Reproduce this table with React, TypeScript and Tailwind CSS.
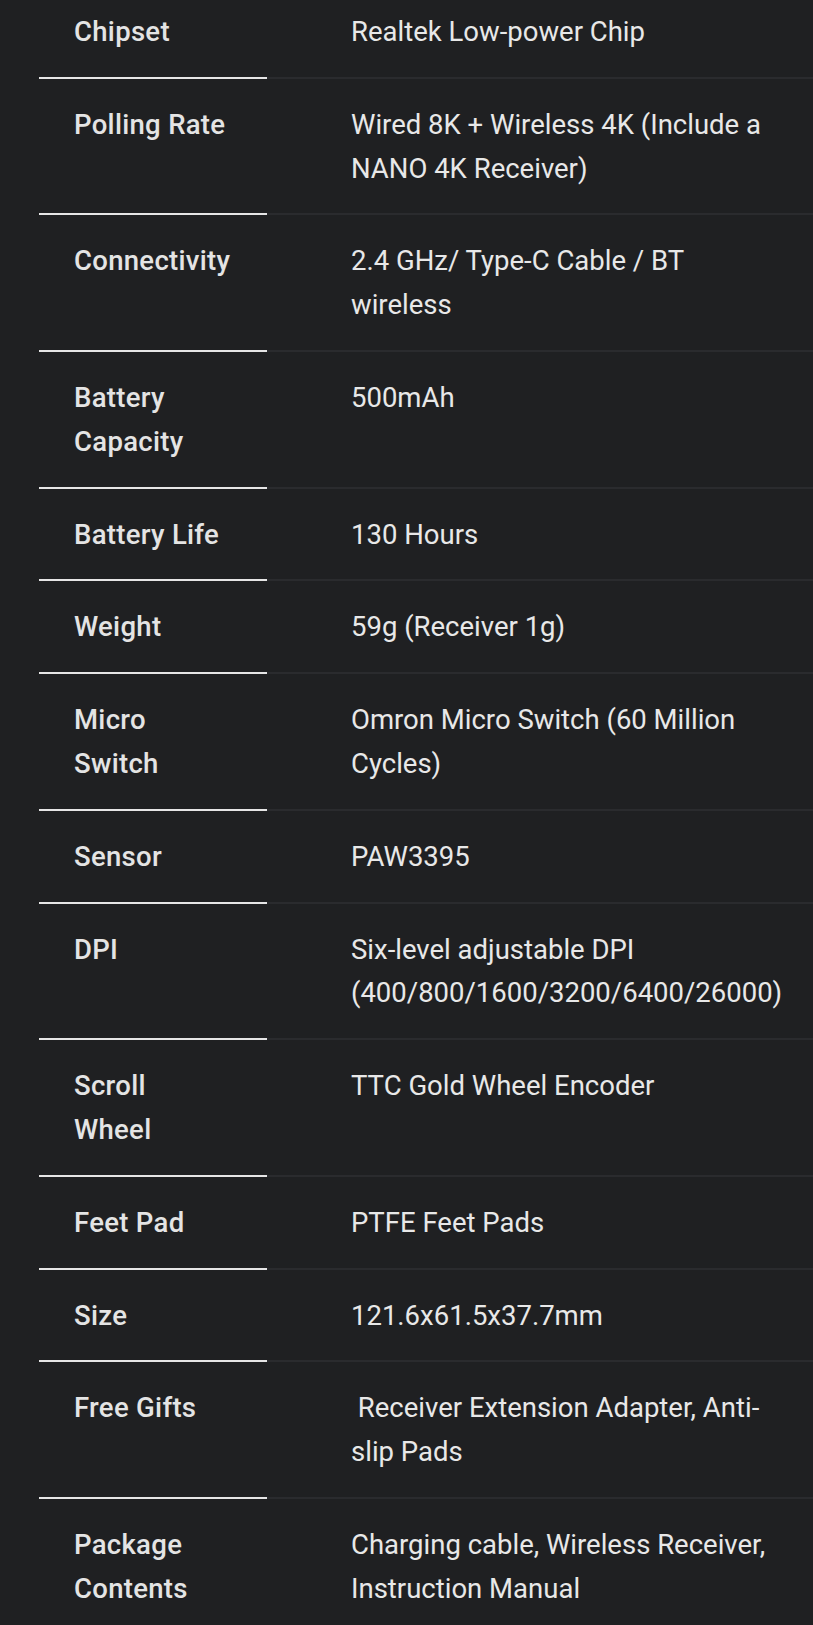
const specs: [string[], string[]][] = [
  [['Chipset'], ['Realtek Low-power Chip']],
  [['Polling Rate'], ['Wired 8K + Wireless 4K (Include a', 'NANO 4K Receiver)']],
  [['Connectivity'], ['2.4 GHz/ Type-C Cable / BT', 'wireless']],
  [['Battery', 'Capacity'], ['500mAh']],
  [['Battery Life'], ['130 Hours']],
  [['Weight'], ['59g (Receiver 1g)']],
  [['Micro', 'Switch'], ['Omron Micro Switch (60 Million', 'Cycles)']],
  [['Sensor'], ['PAW3395']],
  [['DPI'], ['Six-level adjustable DPI', '(400/800/1600/3200/6400/26000)']],
  [['Scroll', 'Wheel'], ['TTC Gold Wheel Encoder']],
  [['Feet Pad'], ['PTFE Feet Pads']],
  [['Size'], ['121.6x61.5x37.7mm']],
  [['Free Gifts'], ['\u00a0Receiver Extension Adapter, Anti-', 'slip Pads']],
  [['Package', 'Contents'], ['Charging cable, Wireless Receiver,', 'Instruction Manual']],
];

function Lines({ lines }: { lines: string[] }) {
  return (
    <>
      {lines.map((line, i) => (
        <span key={i} className="block whitespace-nowrap">
          {line}
        </span>
      ))}
    </>
  );
}

export default function App() {
  return (
    <div className="min-h-[1625px] w-[813px] overflow-hidden bg-[#1f2022] font-['Roboto',sans-serif] text-[27.5px] leading-[43.8px] text-[#e8e8e8]">
      <div className="-mt-[14px] pl-[39px]">
        {specs.map(([label, value]) => (
          <div key={label.join(' ')} className="flex">
            <div className="w-[228px] shrink-0 border-b-2 border-[#e6e6e6] pt-[24px] pb-[23px] pl-[35px] pr-[20px] font-medium tracking-[0.3px] text-[#e4e4e4]">
              <Lines lines={label} />
            </div>
            <div className="w-[546px] shrink-0 border-b-2 border-[#2a2b2e] pt-[24px] pb-[23px] pl-[84px] pr-[10px]">
              <Lines lines={value} />
            </div>
          </div>
        ))}
      </div>
    </div>
  );
}
